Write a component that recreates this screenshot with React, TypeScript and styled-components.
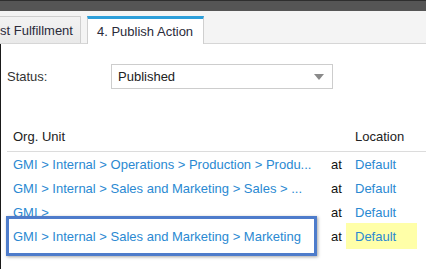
import styled, { createGlobalStyle } from "styled-components";

const GlobalStyle = createGlobalStyle`
  body {
    margin: 0;
    font-family: "Liberation Sans", Arial, sans-serif;
    font-size: 13px;
    color: #222;
    background: #fff;
  }
`;

type Row = { unit: string; location: string; selected?: boolean };

const rows: Row[] = [
  { unit: "GMI > Internal > Operations > Production > Produ...", location: "Default" },
  { unit: "GMI > Internal > Sales and Marketing > Sales > ...", location: "Default" },
  { unit: "GMI >", location: "Default" },
  { unit: "GMI > Internal > Sales and Marketing > Marketing", location: "Default", selected: true },
];

const App = () => {
  return (
    <Page>
      <GlobalStyle />
      <TopBar />
      <TabStrip>
        <Tab>st Fulfillment</Tab>
        <Tab active>4. Publish Action</Tab>
      </TabStrip>
      <Content>
        <StatusRow>
          <Label>Status:</Label>
          <Select>
            <span>Published</span>
            <Arrow />
          </Select>
        </StatusRow>
        <Table>
          <HeaderCell wide>Org. Unit</HeaderCell>
          <HeaderCell>Location</HeaderCell>
          {rows.map(({ unit, location, selected }) => (
            <RowGroup key={unit}>
              <UnitCell>
                {selected && <Frame />}
                <Link>{unit}</Link>
              </UnitCell>
              <AtCell>at</AtCell>
              <LocationCell>
                {selected && <Marker />}
                <Link>{location}</Link>
              </LocationCell>
            </RowGroup>
          ))}
        </Table>
      </Content>
    </Page>
  );
};

const Page = styled.div`
  width: 426px;
  height: 269px;
  overflow: hidden;
  display: flex;
  flex-direction: column;
`;

const TopBar = styled.div`
  height: 10px;
  background: #555;
  border-top: 1px solid #2e2e2e;
  flex-shrink: 0;
`;

const TabStrip = styled.div`
  height: 32px;
  background: #f4f4f4;
  border-bottom: 1px solid #d6d6d6;
  display: flex;
  align-items: flex-end;
  gap: 6px;
  flex-shrink: 0;
  position: relative;
  z-index: 1;
`;

const Tab = styled.div<{ active?: boolean }>`
  box-sizing: border-box;
  height: ${({ active }) => (active ? "28px" : "27px")};
  margin-bottom: ${({ active }) => (active ? "-1px" : "0")};
  display: flex;
  align-items: center;
  white-space: nowrap;
  color: #2b2b3a;
  background: ${({ active }) => (active ? "#fff" : "linear-gradient(#f3f3f3, #e9e9e9)")};
  border: 1px solid #cfcfcf;
  border-bottom: none;
  border-left: ${({ active }) => (active ? "1px solid #cfcfcf" : "none")};
  border-top: ${({ active }) => (active ? "3px solid #2d9fda" : "1px solid #cfcfcf")};
  padding: ${({ active }) => (active ? "0 10px 0 9px" : "0 7px 0 0")};
`;

const Content = styled.div`
  flex: 1;
  border-left: 1px solid #1a1a1a;
  padding: 20px 0 0 6px;
`;

const StatusRow = styled.div`
  display: flex;
  align-items: center;
  height: 25px;
`;

const Label = styled.span`
  width: 104px;
  color: #333;
`;

const Select = styled.div`
  box-sizing: border-box;
  width: 222px;
  height: 25px;
  border: 1px solid #cdcdcd;
  display: flex;
  align-items: center;
  justify-content: space-between;
  padding: 0 8px 0 6px;
  color: #222;
`;

const Arrow = styled.span`
  width: 0;
  height: 0;
  border-left: 5px solid transparent;
  border-right: 5px solid transparent;
  border-top: 6px solid #8a8a8a;
`;

const Table = styled.div`
  display: grid;
  grid-template-columns: 318px 24px 1fr;
  margin-top: 33px;
`;

const HeaderCell = styled.div<{ wide?: boolean }>`
  grid-column: ${({ wide }) => (wide ? "1 / 3" : "3")};
  height: 29px;
  display: flex;
  align-items: center;
  padding-left: 6px;
  border-bottom: 1px solid #dcdcdc;
  color: #222;
`;

const RowGroup = styled.div`
  display: contents;
`;

const Cell = styled.div`
  position: relative;
  height: 24px;
  display: flex;
  align-items: center;
  padding-left: 6px;
  white-space: nowrap;
`;

const UnitCell = styled(Cell)``;

const AtCell = styled(Cell)`
  color: #111;
`;

const LocationCell = styled(Cell)``;

const Link = styled.span`
  position: relative;
  color: #2a89d2;
`;

const Frame = styled.div`
  position: absolute;
  left: -1px;
  top: -8px;
  width: 311px;
  height: 40px;
  box-sizing: border-box;
  border: 3px solid #4e7ccb;
  box-shadow: 1px 1px 3px rgba(0, 0, 0, 0.35);
`;

const Marker = styled.div`
  position: absolute;
  left: -3px;
  top: -1px;
  width: 71px;
  height: 26px;
  background: #ffffa8;
`;

export default App;
